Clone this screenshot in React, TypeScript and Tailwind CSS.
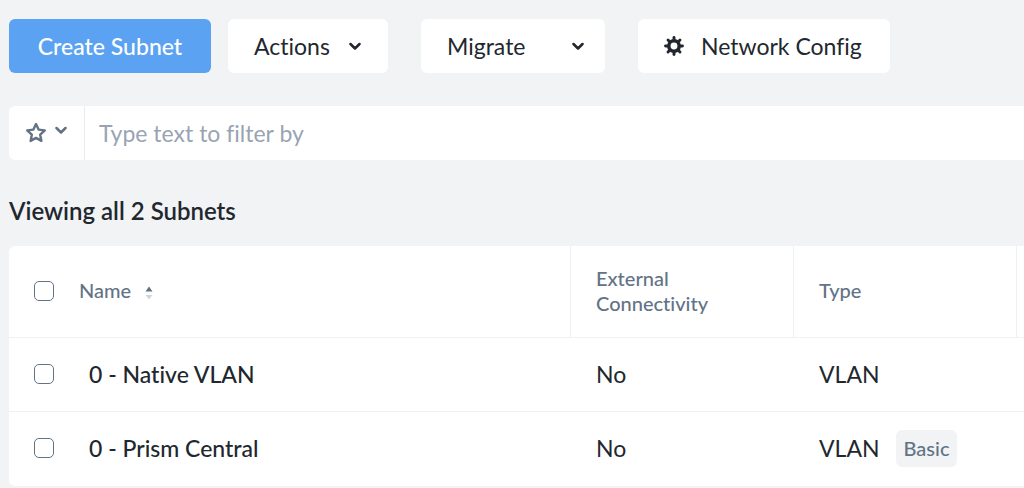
import type { ReactNode } from 'react';

type Subnet = { name: string; external: string; type: string; tag?: string };

const subnets: Subnet[] = [
  { name: '0 - Native VLAN', external: 'No', type: 'VLAN' },
  { name: '0 - Prism Central', external: 'No', type: 'VLAN', tag: 'Basic' },
];

function Chevron() {
  return (
    <svg aria-hidden="true" viewBox="0 0 12 8" className="h-2 w-3 shrink-0" fill="none" stroke="currentColor" strokeWidth="2.5" strokeLinecap="round" strokeLinejoin="round">
      <path d="M1.500 2 6 6.500l4.500-4.500" />
    </svg>
  );
}

function Star() {
  return (
    <svg aria-hidden="true" viewBox="0 0 22 22" className="size-[22px] shrink-0" fill="none" stroke="currentColor" strokeWidth="2.4" strokeLinejoin="round">
      <path d="M11 2l2.600 5.600 6.200.8-4.600 4.300 1.200 6.200L11 15.900l-5.400 3 1.200-6.200L2.200 8.400l6.200-.8z" />
    </svg>
  );
}

function Gear() {
  const angles = [0, 45, 90, 135, 180, 225, 270, 315];
  return (
    <svg aria-hidden="true" viewBox="0 0 20 20" className="size-5 shrink-0" fill="none" stroke="currentColor">
      <circle cx="10" cy="10" r="5.2" strokeWidth="3.5" />
      {angles.map((a) => (
        <path key={a} d="M10 4V1.5" strokeWidth="2.9" strokeLinecap="round" transform={`rotate(${a} 10 10)`} />
      ))}
    </svg>
  );
}

function SortArrows() {
  return (
    <svg aria-hidden="true" viewBox="0 0 8 14" className="mt-1 h-3.5 w-2 shrink-0">
      <path d="M4 .5 7.500 5.500h-7z" fill="#627386" />
      <path d="M4 13.500 7.500 9h-7z" fill="#d1d5da" />
    </svg>
  );
}

function ToolButton({ children, className }: { children: ReactNode; className: string }) {
  return (
    <button type="button" className={`flex h-[54px] items-center rounded-md text-[23px] leading-7 whitespace-nowrap ${className}`}>
      {children}
    </button>
  );
}

function Check({ label }: { label: string }) {
  return (
    <input
      type="checkbox"
      aria-label={label}
      className="block size-5 appearance-none rounded-[5px] border border-[#627386] bg-white checked:bg-[#5ba3f2]"
    />
  );
}

export default function App() {
  return (
    <main className="min-h-screen overflow-hidden bg-[#f2f3f5] pt-[19px] pl-[9px] font-['Lato','Liberation_Sans',sans-serif] text-[#22272e] [font-variant-ligatures:none]">
      <div className="flex items-center">
        <ToolButton className="w-[202px] justify-center bg-[#5ba3f2] font-medium text-white">Create Subnet</ToolButton>
        <ToolButton className="ml-[17px] w-40 justify-between bg-white pr-[27px] pl-[26px]">
          Actions
          <Chevron />
        </ToolButton>
        <ToolButton className="ml-[33px] w-[184px] justify-between bg-white pr-[21px] pl-[26px]">
          Migrate
          <Chevron />
        </ToolButton>
        <ToolButton className="ml-[33px] w-[252px] gap-[17px] bg-white pl-[26px]">
          <Gear />
          Network Config
        </ToolButton>
      </div>

      <div className="mt-[33px] flex h-[54px] rounded-l-md bg-white text-[#627386]">
        <button type="button" aria-label="Saved filters" className="flex w-[76px] items-center gap-2 border-r border-[#e9ebee] pl-4">
          <Star />
          <span className="pb-1.5">
            <Chevron />
          </span>
        </button>
        <input
          type="text"
          aria-label="Filter subnets"
          placeholder="Type text to filter by"
          className="min-w-0 flex-1 px-3.5 text-[23px] text-[#22272e] outline-none placeholder:text-[#9aa3b3]"
        />
      </div>

      <h1 className="mt-[35px] text-[24px] leading-8 font-semibold">Viewing all 2 Subnets</h1>

      <table className="mt-[19px] w-full table-fixed border-separate border-spacing-0 overflow-hidden rounded-l-md bg-white text-left">
        <colgroup>
          <col className="w-[70px]" />
          <col />
          <col className="w-[223px]" />
          <col className="w-[223px]" />
          <col className="w-[7px]" />
        </colgroup>
        <thead>
          <tr className="h-[92px] text-[20px] leading-[25px] text-[#627386] [&>th]:border-b [&>th]:border-[#eef0f2] [&>th]:pt-0 [&>th]:pb-0.5 [&>th]:font-medium">
            <th scope="col" className="pl-[25px]">
              <Check label="Select all subnets" />
            </th>
            <th scope="col" className="border-r">
              <button type="button" className="flex items-center gap-3.5">
                Name
                <SortArrows />
              </button>
            </th>
            <th scope="col" className="border-r pr-12 pl-[25px]">External Connectivity</th>
            <th scope="col" className="border-r pl-[25px]">Type</th>
            <td className="border-b border-[#eef0f2]" />
          </tr>
        </thead>
        <tbody className="text-[23px] leading-7 [&>tr:first-child>td]:border-b [&>tr:first-child>td]:border-[#eef0f2] [&>tr>td]:pb-0.5">
          {subnets.map((s) => (
            <tr key={s.name} className="h-[74px]">
              <td className="pl-[25px]">
                <Check label={`Select ${s.name}`} />
              </td>
              <td className="pl-2.5 font-medium">{s.name}</td>
              <td className="pl-[25px]">{s.external}</td>
              <td className="pl-[25px]">
                <div className="flex items-center gap-4">
                  {s.type}
                  {s.tag && <span className="rounded-md bg-[#f2f3f5] px-2 py-1.5 text-[20px] leading-[25px] font-medium text-[#627386]">{s.tag}</span>}
                </div>
              </td>
              <td />
            </tr>
          ))}
        </tbody>
      </table>
    </main>
  );
}
